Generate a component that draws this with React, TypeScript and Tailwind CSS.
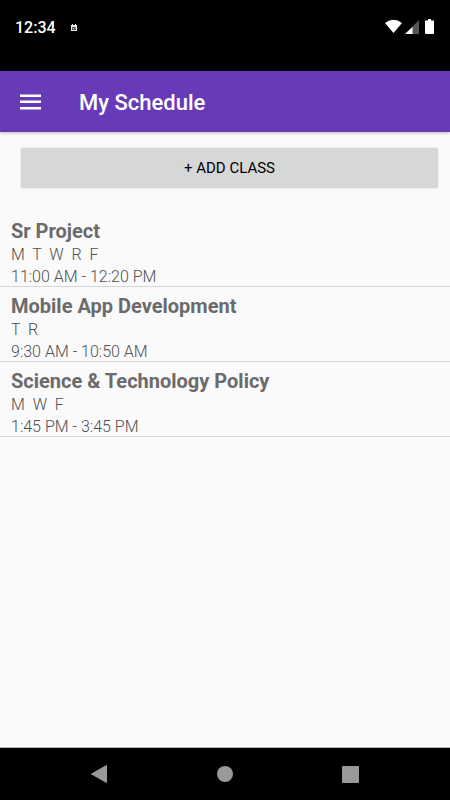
type ClassEntry = { name: string; days: string[]; time: string };

const classes: ClassEntry[] = [
  { name: "Sr Project", days: ["M", "T", "W", "R", "F"], time: "11:00 AM - 12:20 PM" },
  { name: "Mobile App Development", days: ["T", "R"], time: "9:30 AM - 10:50 AM" },
  { name: "Science & Technology Policy", days: ["M", "W", "F"], time: "1:45 PM - 3:45 PM" },
];

function StatusBar() {
  return (
    <div className="flex h-[71px] items-start justify-between bg-black pt-4 pr-4 pl-[15px] text-white">
      <div className="flex items-center gap-[14px]">
        <span className="text-base leading-6 font-medium">12:34</span>
        <svg className="h-2 w-2" viewBox="0 0 8 8" aria-hidden="true">
          <path d="M1 1h1V0h1v1h2V0h1v1h1v6H1z" fill="#e8e8e8" />
          <path d="M2 3h4v3H2z" fill="#555" />
          <path d="M3 4h1v1H3zM5 4h1v1H5z" fill="#ccc" />
        </svg>
      </div>
      <div className="flex items-start gap-[3px] pt-[3px]">
        <svg className="h-[15px] w-[17px]" viewBox="0 0 17 15" aria-hidden="true">
          <path d="M0 4Q8.500-2.500 17 4L8.500 14z" fill="#fff" />
        </svg>
        <svg className="h-[15px] w-[14px]" viewBox="0 0 14 15" aria-hidden="true">
          <path d="M14 1v14H0z" fill="#555" />
          <path d="M7.500 8V15H0z" fill="#fff" />
        </svg>
        <svg className="ml-[3px] h-[15px] w-[9px]" viewBox="0 0 9 15" aria-hidden="true">
          <path d="M3 0h3v1.500h2.500q.5 0 .5.500v12q0 1-1 1H1q-1 0-1-1V2q0-.5.5-.5H3z" fill="#fff" />
        </svg>
      </div>
    </div>
  );
}

function AppBar() {
  return (
    <header className="relative flex h-[61px] items-center gap-[38px] bg-[#673ab7] px-5 pt-0.5 text-white shadow-[0_1px_3px_rgba(0,0,0,0.25)]">
      <button type="button" aria-label="Open menu">
        <svg className="h-[18px] w-[21px]" viewBox="0 0 21 18" fill="#fff" aria-hidden="true">
          <path d="M0 .5h21V3H0zM0 6.500h21V9H0zM0 13h21v2.500H0z" />
        </svg>
      </button>
      <h1 className="text-[22px] leading-8 font-medium">My Schedule</h1>
    </header>
  );
}

function ClassRow({ entry }: { entry: ClassEntry }) {
  return (
    <li className="border-b border-[#d6d6d6] px-[11px] pt-[7px] text-[#505050]">
      <h2 className="text-xl leading-6 font-bold text-[#6b6b6b]">{entry.name}</h2>
      <p className="text-base leading-6 font-light whitespace-pre">{entry.days.join("  ")}</p>
      <p className="text-base leading-[19px] font-light">{entry.time}</p>
    </li>
  );
}

function NavBar() {
  return (
    <nav className="grid h-[53px] grid-cols-3 items-center border-t border-[#b5b5b5] bg-black px-[37px]">
      <button type="button" aria-label="Back" className="flex justify-center">
        <svg className="h-[18px] w-[17px]" viewBox="0 0 17 18" aria-hidden="true">
          <path d="M15.500.5v17L.5 9z" fill="#999" stroke="#999" strokeLinejoin="round" />
        </svg>
      </button>
      <button type="button" aria-label="Home" className="flex justify-center">
        <span className="h-4 w-4 rounded-full bg-[#999]" />
      </button>
      <button type="button" aria-label="Recent apps" className="flex justify-center">
        <span className="h-[17px] w-[17px] rounded-[1px] bg-[#999]" />
      </button>
    </nav>
  );
}

export default function App() {
  return (
    <div className="flex min-h-screen flex-col bg-[#fafafa] font-['Roboto',sans-serif]">
      <StatusBar />
      <AppBar />
      <main className="flex-1">
        <div className="pt-4 pr-3 pb-6 pl-[21px]">
          <button
            type="button"
            className="h-10 w-full rounded-[2px] bg-[#d6d7d7] text-[15px] leading-5 text-black shadow-[0_0_2px_rgba(0,0,0,0.2)]"
          >
            + ADD CLASS
          </button>
        </div>
        <ul>
          {classes.map((entry) => (
            <ClassRow key={entry.name} entry={entry} />
          ))}
        </ul>
      </main>
      <NavBar />
    </div>
  );
}
